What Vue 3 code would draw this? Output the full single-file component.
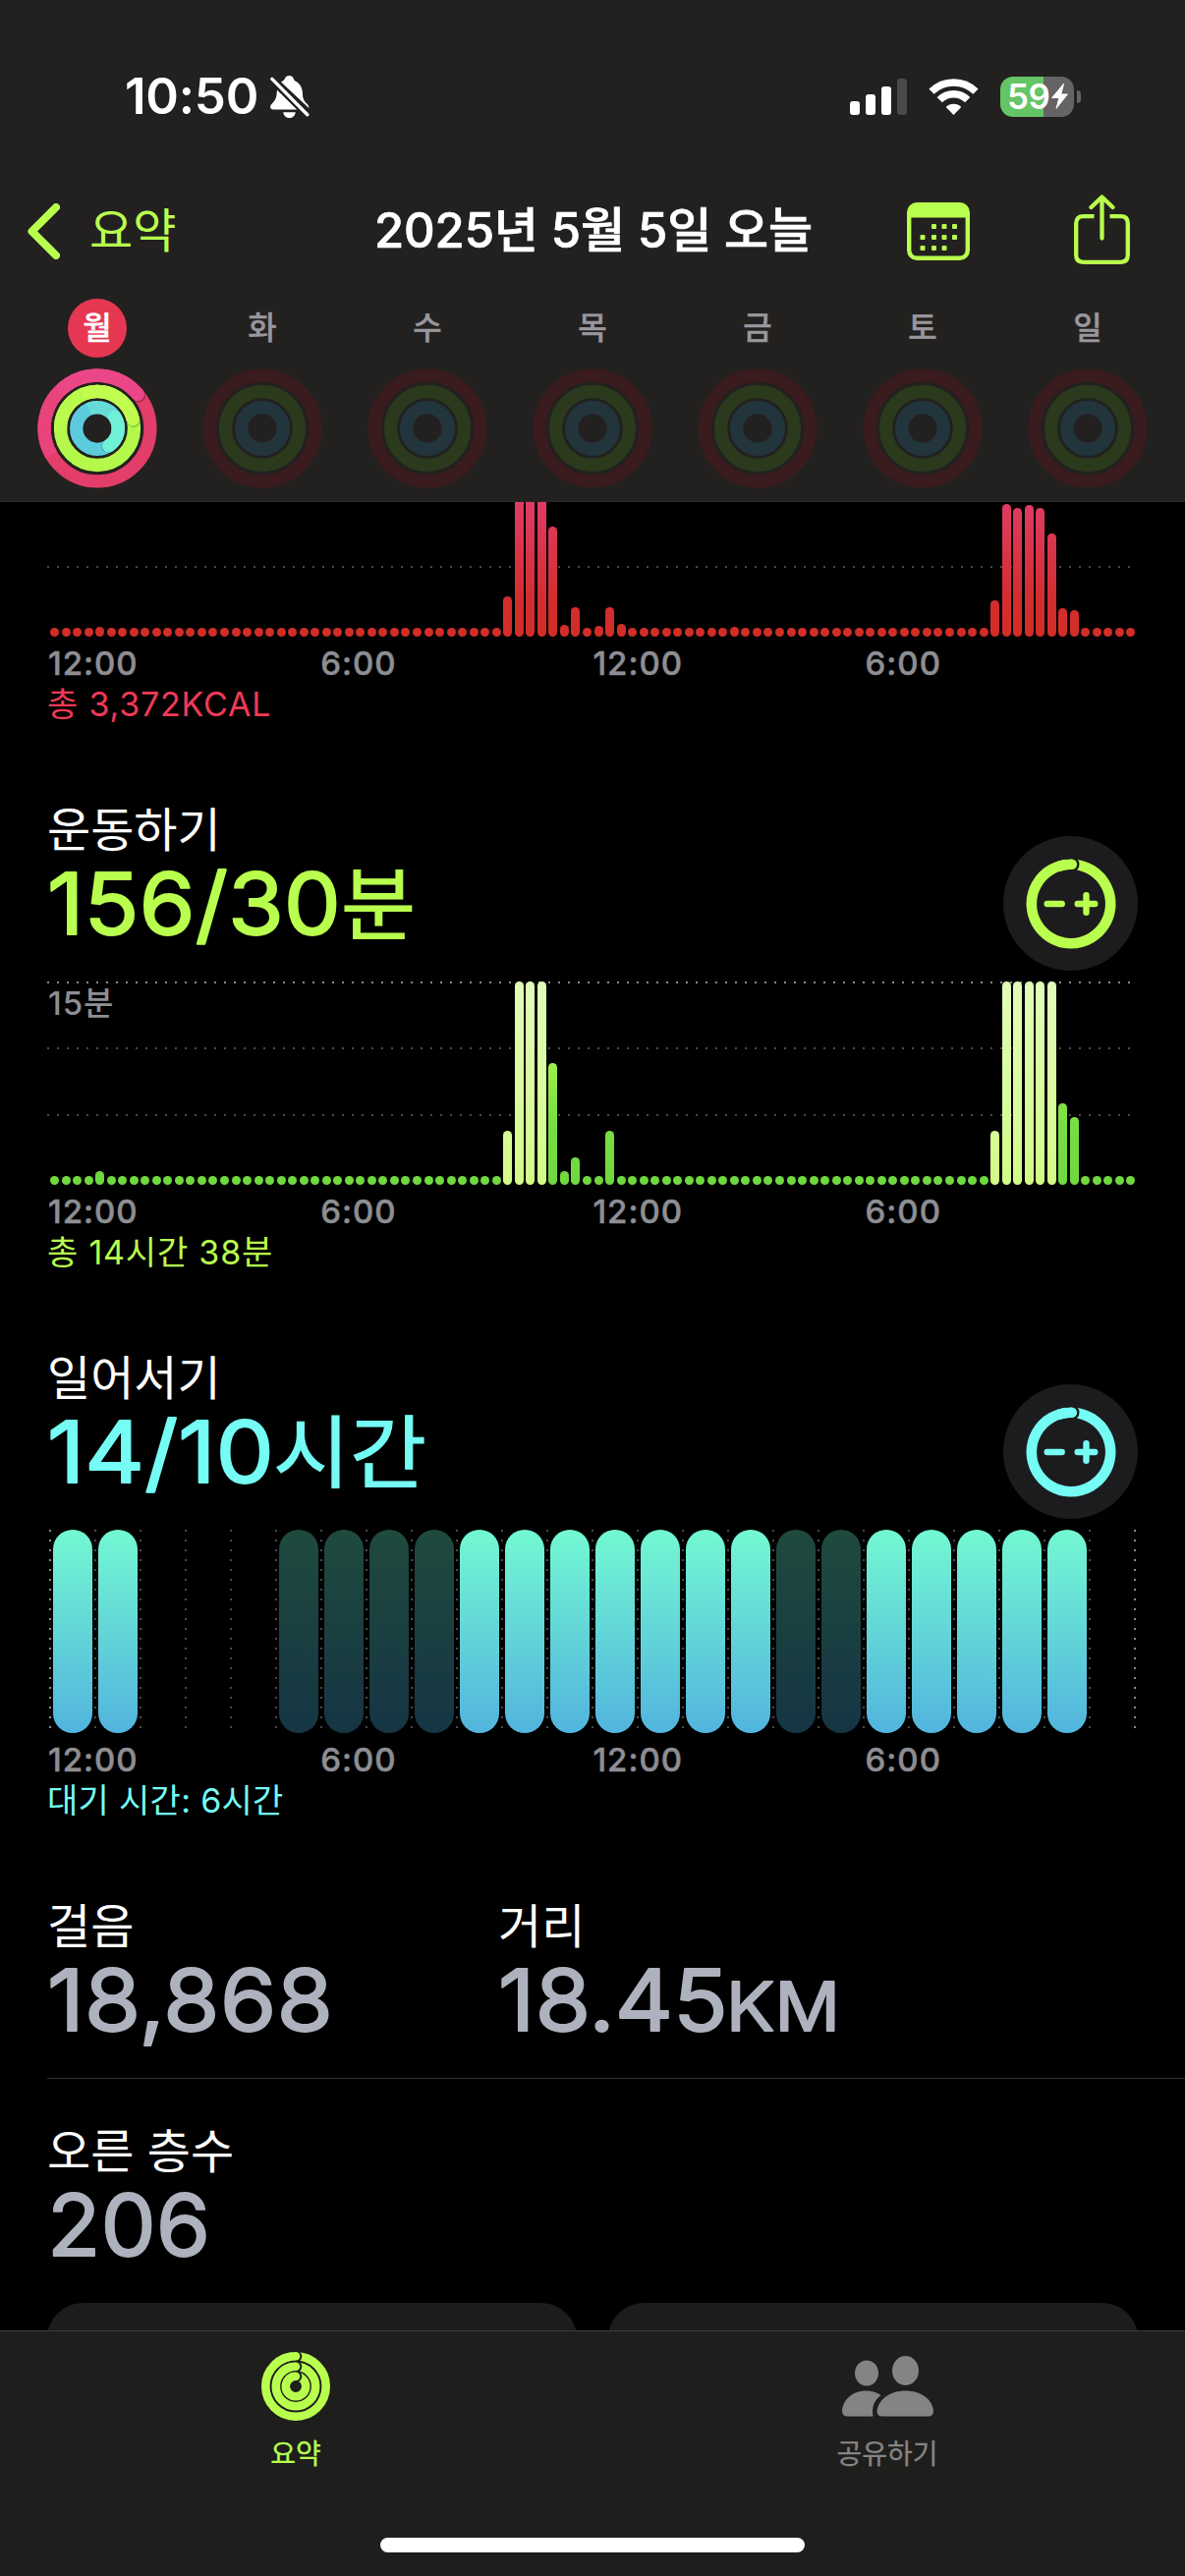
<template>
  <div class="screen">
    <header class="header">
      <div class="status-bar">
        <div class="status-left">
          <span class="time">10:50</span>
          <svg class="bell" viewBox="0 0 40 43" width="40" height="43">
            <path d="M11 6.5C13 5.3 14 4.6 14.6 3.4C15.4 1.2 17.3 0 19.3 0s3.9 1.2 4.7 3.4c.3 1 1.100 1.800 2.400 2.600C31 8.600 32.800 13 33 19c.1 5 2 7.400 4.600 9.800C39.200 30.600 39.400 32 39.300 33z" fill="#fff" />
            <path d="M7 14.500L27.500 34.500H3.400C-.2 34.500-.8 31.300 1.100 29.200C4.500 25.800 6.500 23 6.600 18z" fill="#fff" />
            <path d="M13.200 37.200h12.600c-.6 3.600-3.100 5.800-6.300 5.800s-5.700-2.200-6.300-5.800z" fill="#fff" />
            <path d="M2 3.500L38 39.500" stroke="#22211f" stroke-width="8" />
            <path d="M1.900 3.400L37.800 39.700" stroke="#fff" stroke-width="3.400" stroke-linecap="round" />
          </svg>
        </div>
        <div class="status-right">
          <svg viewBox="0 0 58 37" width="58" height="37">
            <rect x="0" y="23" width="10" height="14" rx="3" fill="#fff" />
            <rect x="16" y="16" width="10" height="21" rx="3" fill="#fff" />
            <rect x="32" y="8" width="10" height="29" rx="3" fill="#fff" />
            <rect x="48" y="0" width="10" height="37" rx="3" fill="#4b4a49" />
          </svg>
          <svg class="wifi" viewBox="0 0 51 37" width="51" height="37">
            <path d="M3 13.200A32 32 0 0 1 48 13.200" fill="none" stroke="#fff" stroke-width="7.400" />
            <path d="M11.300 21.700A20 20 0 0 1 39.700 21.700" fill="none" stroke="#fff" stroke-width="7.400" />
            <path d="M25.500 37L17.700 29Q21 25.800 25.500 25.800T33.300 29z" fill="#fff" />
          </svg>
          <div class="battery">
            <div class="battery-body">
              <span>59</span>
              <svg viewBox="0 0 17 26" width="17" height="26">
                <path d="M12.300 0L.4 14.200c-.3.5-.1.900.4.900h6.500L4.600 25.300c-.2.600.4.800.8.300L16.700 11.300c.3-.5.1-.9-.4-.9h-5.900L13 .4c.1-.5-.4-.7-.7-.4z" fill="#fff" />
              </svg>
            </div>
            <i class="battery-tip"></i>
          </div>
        </div>
      </div>

      <nav class="nav">
        <div class="back">
          <svg viewBox="0 0 33 57" width="33" height="57">
            <path d="M29 4L4.500 28.500L29 53" fill="none" stroke="#b9ff4e" stroke-width="8" stroke-linecap="round" stroke-linejoin="round" />
          </svg>
          <span>요약</span>
        </div>
        <h1 class="nav-title">2025년 5월 5일 오늘</h1>
        <div class="nav-actions">
          <svg viewBox="0 0 64 59" width="64" height="59">
            <rect x="2.200" y="2.200" width="59.600" height="54.600" rx="8" fill="none" stroke="#b9ff4e" stroke-width="4.400" />
            <path d="M2 15.500V9Q2 2 9 2H55Q62 2 62 9V15.500z" fill="#b9ff4e" />
            <rect v-for="d in calendarDots" :key="d.join()" :x="d[0]" :y="d[1]" width="5" height="5" rx="1" fill="#b9ff4e" />
          </svg>
          <svg class="share" viewBox="0 0 57 71" width="57" height="71">
            <g fill="none" stroke="#b9ff4e" stroke-width="4.300">
              <path d="M20.500 22.200H9.500Q2.200 22.200 2.200 29.500V61.500Q2.200 68.800 9.500 68.800H47.500Q54.800 68.800 54.800 61.500V29.500Q54.800 22.200 47.500 22.200H36.500" />
              <path d="M28.500 44.500V3M17.500 13L28.500 2.500L39.500 13" stroke-linecap="round" stroke-linejoin="round" />
            </g>
          </svg>
        </div>
      </nav>

      <div class="week">
        <div v-for="day in days" :key="day" class="day">
          <span class="day-name" :class="{ today: day === '월' }">{{ day }}</span>
          <svg viewBox="-61 -61 122 122" width="122" height="122">
            <template v-if="day === '월'">
              <g v-for="r in todayRings" :key="r.radius" fill="none" :stroke-width="13.3">
                <circle :r="r.radius" :stroke="r.base" />
                <path :d="arc(r.radius, r.end - 170, r.end)" :stroke="r.tail" />
                <circle :cx="point(r.radius, r.end + 2)[0]" :cy="point(r.radius, r.end + 2)[1]" r="6.6" stroke="none" fill="#000" opacity=".28" />
                <path :d="arc(r.radius, r.end - 90, r.end)" :stroke="r.head" stroke-linecap="round" />
              </g>
            </template>
            <g v-else fill="none" stroke-width="13.3">
              <circle r="53.9" stroke="#3a1b1e" />
              <circle r="37.5" stroke="#2b391d" />
              <circle r="21.3" stroke="#23353c" />
            </g>
          </svg>
        </div>
      </div>
    </header>

    <main class="content">
      <section class="metric move">
        <div class="chart move-chart">
          <div v-for="(h, i) in moveBars" :key="i" class="bar" :style="{ height: h + 'px' }"></div>
        </div>
        <div class="axis"><span v-for="(t, i) in hours" :key="i">{{ t }}</span></div>
        <p class="total">총 3,372KCAL</p>
      </section>

      <section class="metric exercise">
        <div class="metric-head">
          <div>
            <h2>운동하기</h2>
            <svg class="value" viewBox="0 0 500 88" width="500" height="88">
              <text class="digits" x="0" y="75.700" textLength="299" lengthAdjust="spacingAndGlyphs">156/30</text>
              <text class="unit" x="299" y="75" textLength="76" lengthAdjust="spacingAndGlyphs">분</text>
            </svg>
          </div>
          <button class="adjust">
            <svg viewBox="-46 -46 92 92" width="92" height="92">
              <path :d="arc(40.2, 5, 358)" stroke-width="10.6" />
              <circle cx=".8" cy="-40.200" r="7.700" fill="#1c1c1e" stroke="none" />
              <path :d="arc(40.2, 340, 361)" stroke-width="10.6" />
              <circle cx=".8" cy="-40.200" r="5.300" fill="currentColor" stroke="none" />
              <path d="M-24.300 0H-9.300M6.700 0H24.300M15.500 -8.800V8.800" stroke-width="6.400" stroke-linecap="round" />
            </svg>
          </button>
        </div>
        <div class="chart exercise-chart">
          <span class="scale">15분</span>
          <div
            v-for="(b, i) in exerciseBars"
            :key="i"
            class="bar"
            :class="{ workout: b.workout }"
            :style="{ height: b.height + 'px' }"
          ></div>
        </div>
        <div class="axis"><span v-for="(t, i) in hours" :key="i">{{ t }}</span></div>
        <p class="total">총 14시간 38분</p>
      </section>

      <section class="metric stand">
        <div class="metric-head">
          <div>
            <h2>일어서기</h2>
            <svg class="value" viewBox="0 0 500 88" width="500" height="88">
              <text class="digits" x="0" y="75.700" textLength="231" lengthAdjust="spacingAndGlyphs">14/10</text>
              <text class="unit" x="230" y="75" textLength="156" lengthAdjust="spacingAndGlyphs">시간</text>
            </svg>
          </div>
          <button class="adjust">
            <svg viewBox="-46 -46 92 92" width="92" height="92">
              <path :d="arc(40.2, 5, 358)" stroke-width="10.6" />
              <circle cx=".8" cy="-40.200" r="7.700" fill="#1c1c1e" stroke="none" />
              <path :d="arc(40.2, 340, 361)" stroke-width="10.6" />
              <circle cx=".8" cy="-40.200" r="5.300" fill="currentColor" stroke="none" />
              <path d="M-24.300 0H-9.300M6.700 0H24.300M15.500 -8.800V8.800" stroke-width="6.400" stroke-linecap="round" />
            </svg>
          </button>
        </div>
        <div class="stand-chart">
          <div v-for="(s, i) in standHours" :key="i" class="stand-slot">
            <div v-if="s" class="stand-bar" :class="s"></div>
          </div>
        </div>
        <div class="axis"><span v-for="(t, i) in hours" :key="i">{{ t }}</span></div>
        <p class="total idle-total">대기 시간: 6시간</p>
      </section>

      <section class="stats">
        <div class="stat">
          <h2>걸음</h2>
          <svg class="value" viewBox="0 0 400 88" width="400" height="88">
            <text class="digits" x="0" y="75.700" textLength="291" lengthAdjust="spacingAndGlyphs">18,868</text>
          </svg>
        </div>
        <div class="stat">
          <h2>거리</h2>
          <svg class="value" viewBox="0 0 400 88" width="400" height="88">
            <text class="digits" x="0" y="75.700" textLength="234" lengthAdjust="spacingAndGlyphs">18.45</text>
            <text class="digits small" x="232" y="75.700" textLength="116" lengthAdjust="spacingAndGlyphs">KM</text>
          </svg>
        </div>
      </section>
      <section class="stats last">
        <div class="stat">
          <h2>오른 층수</h2>
          <svg class="value" viewBox="0 0 400 88" width="400" height="88">
            <text class="digits" x="0" y="75.700" textLength="166" lengthAdjust="spacingAndGlyphs">206</text>
          </svg>
        </div>
      </section>

      <div class="cards">
        <div class="card"></div>
        <div class="card"></div>
      </div>
    </main>

    <footer class="tab-bar">
      <div class="tabs">
        <div class="tab active">
          <svg viewBox="-35 -35 70 70" width="70" height="70">
            <g v-for="r in tabRings" :key="r" fill="none" stroke="#b9ff4e" stroke-width="8.6">
              <circle :r="r" />
              <circle cx=".4" :cy="-r" r="5.900" fill="#1e1e1c" stroke="none" />
              <path :d="arc(r, 315, 359)" />
              <circle cx="0" :cy="-r" r="4.300" fill="#b9ff4e" stroke="none" />
            </g>
          </svg>
          <span>요약</span>
        </div>
        <div class="tab">
          <svg viewBox="0 0 93 70" width="93" height="70">
            <g fill="#848484">
              <ellipse cx="25" cy="21.500" rx="12" ry="13" />
              <path d="M6 65.500Q0 65.500 0 60C1 48 11 39.500 24.500 39.500C30.500 39.500 35.500 41.200 39.500 44Q29 52 31.500 65.500z" />
              <ellipse cx="64.500" cy="19" rx="13.500" ry="15" />
              <path d="M41 65.500Q35.500 65.500 35.500 60C37 48 49 39.500 64.500 39.500S92 48 93 60Q93 65.500 87.500 65.500z" />
            </g>
          </svg>
          <span>공유하기</span>
        </div>
      </div>
      <div class="home-indicator"></div>
    </footer>
  </div>
</template>

<script setup>
const days = ['월', '화', '수', '목', '금', '토', '일']
const hours = ['12:00', '6:00', '12:00', '6:00']

const todayRings = [
  { radius: 53.9, end: 50, base: '#e33d6a', tail: '#e8437c', head: '#ea4688' },
  { radius: 37.5, end: 76, base: '#b3f84b', tail: '#bafa4c', head: '#c1fd4f' },
  { radius: 21.3, end: 147, base: '#5cccdc', tail: '#66dbd8', head: '#70f1d5' }
]

const tabRings = [30.7, 20.2, 10.2]

const calendarDots = [
  [25, 22], [35.5, 22], [46, 22],
  [13.5, 33], [25, 33], [35.5, 33], [46, 33],
  [13.5, 44], [25, 44], [35.5, 44]
]

// 15-minute slots, idle slots are drawn as dots
const slots = (values) => Array.from({ length: 96 }, (_, i) => values[i] || 9)

const moveBars = slots({
  4: 10, 40: 41, 41: 190, 42: 200, 43: 190, 44: 112, 45: 12, 46: 30, 48: 11, 49: 30, 50: 13,
  60: 10, 83: 37, 84: 135, 85: 131, 86: 134, 87: 131, 88: 105, 89: 29, 90: 27
})

const workoutSlots = [40, 41, 42, 43, 83, 84, 85, 86, 87, 88]
const exerciseBars = slots({
  4: 14, 40: 55, 41: 207, 42: 207, 43: 207, 44: 124, 45: 14, 46: 28, 49: 55,
  83: 55, 84: 207, 85: 207, 86: 207, 87: 207, 88: 207, 89: 83, 90: 69
}).map((height, i) => ({ height, workout: workoutSlots.includes(i) }))

const standHours = Array.from({ length: 24 }, (_, i) => {
  if (i < 2 || (i >= 9 && i <= 15) || (i >= 18 && i <= 22)) return 'stood'
  if ((i >= 5 && i <= 8) || i === 16 || i === 17) return 'idle'
  return ''
})

// angles are clockwise degrees from 12 o'clock
const point = (radius, deg) => {
  const a = (deg * Math.PI) / 180
  return [radius * Math.sin(a), -radius * Math.cos(a)]
}

const arc = (radius, from, to) => {
  const [x1, y1] = point(radius, from)
  const [x2, y2] = point(radius, to)
  return `M${x1} ${y1}A${radius} ${radius} 0 ${to - from > 180 ? 1 : 0} 1 ${x2} ${y2}`
}
</script>

<style>
body {
  margin: 0;
  background: #000;
}
</style>

<style scoped>
.screen {
  width: 1206px;
  height: 2622px;
  display: flex;
  flex-direction: column;
  overflow: hidden;
  background: #000;
  color: #fff;
  font-family: Inter, 'Noto Sans CJK KR', sans-serif;
}

svg {
  display: block;
  flex: none;
}

h1,
h2,
p {
  margin: 0;
}

.header {
  box-sizing: border-box;
  height: 511px;
  flex: none;
  background: #22211f;
  border-bottom: 1px solid #29292a;
}

.status-bar {
  height: 176px;
  box-sizing: border-box;
  padding: 68px 106px 48px 127px;
  display: flex;
  justify-content: space-between;
  align-items: center;
}

.status-left,
.status-right {
  display: flex;
  align-items: center;
}

.time {
  font-size: 51px;
  line-height: 60px;
  font-weight: 600;
  letter-spacing: -0.2px;
}

.bell {
  margin-left: 12px;
}

.wifi {
  margin-left: 22px;
}

.battery {
  margin-left: 22px;
  display: flex;
  align-items: center;
}

.battery-body {
  box-sizing: border-box;
  width: 75px;
  height: 41px;
  padding-left: 7px;
  border-radius: 13px;
  background: linear-gradient(90deg, #65c466 44px, #656365 44px);
  display: flex;
  align-items: center;
  gap: 2px;
}

.battery-body span {
  font-size: 35px;
  font-weight: 600;
  line-height: 41px;
  letter-spacing: -0.5px;
}

.battery-tip {
  width: 4px;
  height: 13px;
  margin-left: 3px;
  border-radius: 0 6px 6px 0;
  background: #656365;
}

.nav {
  height: 118px;
  display: grid;
  grid-template-columns: 1fr auto 1fr;
  align-items: center;
}

.back {
  padding-left: 28px;
  display: flex;
  align-items: center;
  gap: 30px;
  font-size: 48px;
  line-height: 60px;
  color: #b9ff4e;
}

.nav-title {
  padding-left: 2px;
  font-size: 49px;
  line-height: 60px;
  font-weight: 500;
  letter-spacing: -0.1px;
  -webkit-text-stroke: 0.7px #fff;
}

.nav-actions {
  padding-right: 56px;
  display: flex;
  justify-content: flex-end;
  align-items: center;
  gap: 106px;
}

.share {
  margin-top: -3px;
}

.week {
  padding: 10px 15px 0;
  display: flex;
}

.day {
  flex: 1;
  display: flex;
  flex-direction: column;
  align-items: center;
  gap: 11px;
}

.day-name {
  width: 60px;
  height: 60px;
  border-radius: 50%;
  font-size: 32px;
  line-height: 60px;
  font-weight: 500;
  text-align: center;
  color: #98979e;
  -webkit-text-stroke: 0.4px currentColor;
}

.day-name.today {
  background: #e63752;
  color: #fff;
}

.content {
  height: 1861px;
  flex: none;
  overflow: hidden;
}

.metric {
  margin: 0 48px 85px;
}

.metric h2,
.stat h2 {
  font-size: 48px;
  line-height: 60px;
  font-weight: 400;
}

.move {
  --accent: #f03a57;
}

.exercise {
  --accent: #b9ff4e;
}

.stand {
  --accent: #75fcf5;
}

.metric-head {
  height: 184px;
  display: flex;
  justify-content: space-between;
}

.value {
  overflow: visible;
  fill: var(--accent);
  stroke: var(--accent);
}

.digits {
  font-size: 87px;
  font-weight: 400;
  stroke-width: 1.8px;
  stroke-linejoin: round;
}

.digits.small {
  font-size: 69px;
}

.unit {
  font-size: 81px;
  font-weight: 400;
  stroke-width: 1px;
}

.adjust {
  width: 137px;
  height: 137px;
  margin-top: 36px;
  padding: 0;
  border: 0;
  border-radius: 50%;
  background: #1c1c1e;
  color: var(--accent);
  display: flex;
  align-items: center;
  justify-content: center;
}

.adjust svg {
  fill: none;
  stroke: currentColor;
}

.chart {
  --dot: linear-gradient(90deg, #4a4a4a 2px, transparent 2px);
  --dot-top: linear-gradient(90deg, #8a8a8a 2px, transparent 2px);
  position: relative;
  box-sizing: border-box;
  width: 1110px;
  height: 207px;
  padding: 0 2px 0 3px;
  display: flex;
  align-items: flex-end;
  justify-content: space-between;
}

.move-chart {
  height: 137px;
  overflow: hidden;
  background: var(--dot) 0 65px / 10px 2px repeat-x;
}

.exercise-chart {
  background:
    var(--dot-top) 0 0 / 10px 2px repeat-x,
    var(--dot) 0 67px / 10px 2px repeat-x,
    var(--dot) 0 135px / 10px 2px repeat-x;
}

.bar {
  width: 9px;
  flex: none;
  border-radius: 4.5px;
  background: linear-gradient(0deg, #d32d27 0, #d32d2f 40px, #e03b64 135px, #ea4480 207px) bottom / 100% 207px no-repeat;
}

.exercise-chart .bar {
  background-image: linear-gradient(0deg, #6fd83f, #78dd42 30%, #a1f04a 62%, #b9ff4e);
}

.exercise-chart .bar.workout {
  background-image: linear-gradient(0deg, #d3fb86, #e1fcba);
}

.scale {
  position: absolute;
  left: 1px;
  top: 8px;
  font-size: 33px;
  line-height: 28px;
  font-weight: 500;
  letter-spacing: 1px;
  color: #8e8e93;
}

.axis {
  padding-left: 1px;
  display: flex;
  font-size: 33px;
  line-height: 55px;
  font-weight: 500;
  letter-spacing: 1px;
  color: #8e8e93;
  -webkit-text-stroke: 0.5px currentColor;
}

.axis span {
  width: 277.2px;
}

.total {
  font-size: 34px;
  line-height: 27px;
  letter-spacing: 0.8px;
  color: var(--accent);
}

.idle-total {
  letter-spacing: 0.3px;
}

.stand-chart {
  height: 207px;
  margin-left: 2px;
  display: flex;
}

.stand-slot {
  flex: none;
  width: 46px;
  height: 207px;
  padding-left: 4px;
  box-sizing: border-box;
  background: linear-gradient(#4a4a4a 2px, transparent 2px) 0 0 / 2px 10px repeat-y;
}

.stand-slot:first-child {
  background-image: linear-gradient(#8a8a8a 2px, transparent 2px);
}

/* closing line at midnight */
.stand-chart::after {
  content: '';
  flex: none;
  width: 2px;
  background: linear-gradient(#8a8a8a 2px, transparent 2px) 0 0 / 2px 10px repeat-y;
}

.stand-bar {
  width: 40px;
  height: 207px;
  border-radius: 20px;
}

.stand-bar.stood {
  background: linear-gradient(#73f8d2, #52b4de);
}

.stand-bar.idle {
  background: linear-gradient(#1f4a3e, #153544);
}

.stats {
  --accent: #aeb2be;
  box-sizing: border-box;
  height: 229px;
  margin-left: 48px;
  display: flex;
  background: linear-gradient(#303032, #303032) 0 184px / 100% 1px no-repeat;
}

.stats.last {
  height: 184px;
}

.stat {
  width: 459px;
}

.cards {
  margin: 0 48px;
  display: flex;
  gap: 32px;
}

.card {
  flex: 1;
  height: 200px;
  border-radius: 36px;
  background: #1c1c1e;
}

.tab-bar {
  box-sizing: border-box;
  height: 250px;
  border-top: 1px solid #3c3c3c;
  background: #1e1e1c;
}

.tabs {
  height: 210px;
  display: flex;
}

.tab {
  width: 602px;
  padding-top: 21px;
  box-sizing: border-box;
  display: flex;
  flex-direction: column;
  align-items: center;
  gap: 14px;
  font-size: 28px;
  line-height: 40px;
  font-weight: 400;
  color: #848484;
  -webkit-text-stroke: 0.3px currentColor;
}

.tab.active {
  color: #b9ff4e;
}

.home-indicator {
  width: 432px;
  height: 15px;
  margin: 0 auto;
  border-radius: 8px;
  background: #fff;
}
</style>
